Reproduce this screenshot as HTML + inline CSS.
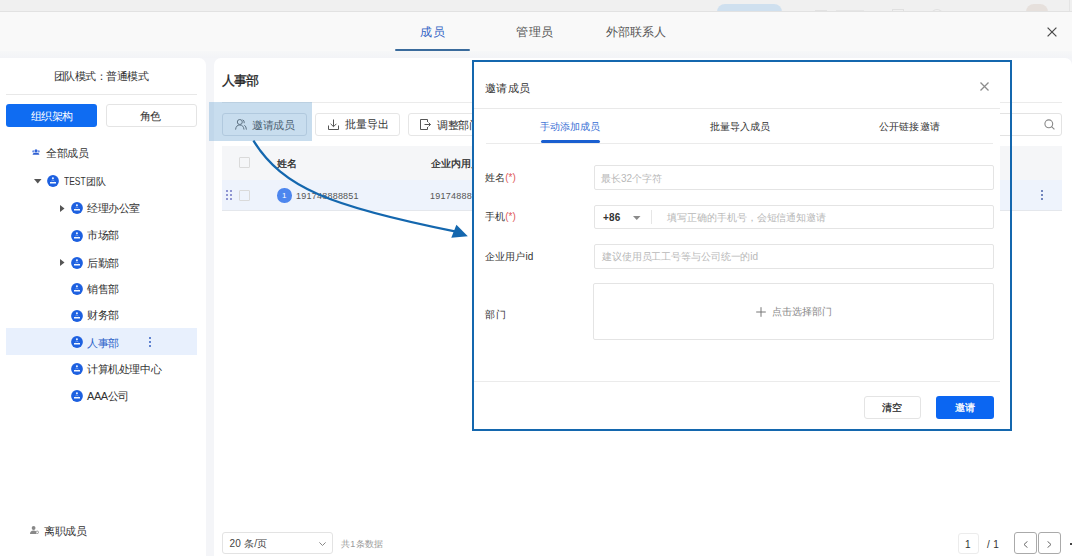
<!DOCTYPE html>
<html><head><meta charset="utf-8">
<style>
*{box-sizing:border-box;margin:0;padding:0}
html,body{width:1072px;height:556px;overflow:hidden;background:#f4f5f8;font-family:"Liberation Sans",sans-serif;color:#333}
.a{position:absolute}
.t{white-space:nowrap;line-height:1}
</style></head><body>
<div class="a" style="left:0;top:0;width:1072px;height:12px;background:#f0f0f0"></div>
<div class="a" style="left:717px;top:4px;width:65px;height:8px;border-radius:8px 8px 0 0;background:#cfe0ef"></div>
<div class="a" style="left:815px;top:10px;width:12px;height:1.5px;background:#e2e2e2"></div>
<div class="a" style="left:836px;top:10px;width:28px;height:1.5px;background:#e6e6e6"></div>
<div class="a" style="left:892px;top:9px;width:12px;height:3px;border:1px solid #e0e0e0;border-bottom:none"></div>
<div class="a" style="left:931px;top:9px;width:12px;height:6px;border-radius:6px 6px 0 0;border:1px solid #e0e0e0;border-bottom:none"></div>
<div class="a" style="left:1026px;top:4px;width:22px;height:8px;border-radius:11px 11px 0 0;background:#e6e0dc"></div>
<div class="a" style="left:1069px;top:0;width:1px;height:12px;background:#e4e4e4"></div>
<div class="a" style="left:0;top:11px;width:1072px;height:1px;background:#e2e2e2"></div>
<div class="a" style="left:0;top:12px;width:1072px;height:39px;background:#f9f9f9"></div>
<div class="a" style="left:0;top:51px;width:1072px;height:7px;background:linear-gradient(#f6f7f8,#f3f4f7)"></div>
<div class="a t" style="left:420px;top:26px;font-size:12px;letter-spacing:0.8px;color:#3565c5;font-weight:normal">成员</div>
<div class="a t" style="left:516px;top:26px;font-size:12px;letter-spacing:0.55px;color:#555;font-weight:normal">管理员</div>
<div class="a t" style="left:606px;top:26px;font-size:12px;letter-spacing:0.03px;color:#555;font-weight:normal">外部联系人</div>
<div class="a" style="left:395px;top:49px;width:75px;height:2px;background:#3a6b9c;border-radius:1px"></div>
<svg class="a" style="left:1046.5px;top:26.5px" width="10" height="10" viewBox="0 0 10 10"><path d="M0.6 0.6L9.4 9.4M9.4 0.6L0.6 9.4" stroke="#4a4a4a" stroke-width="1.25"/></svg>
<div class="a" style="left:0;top:58px;width:206px;height:520px;background:#fff;border-radius:0 7px 0 0"></div>
<div class="a t" style="left:54px;top:71px;font-size:11px;letter-spacing:-0.56px;color:#333;font-weight:normal">团队模式：普通模式</div>
<div class="a" style="left:6px;top:94px;width:191px;height:1px;background:#e8e8e8"></div>
<div class="a" style="left:6px;top:104px;width:91px;height:23px;background:#0f6cf2;border-radius:3px"></div>
<div class="a t" style="left:31px;top:111px;font-size:11px;letter-spacing:-0.53px;color:#fff;font-weight:normal">组织架构</div>
<div class="a" style="left:106px;top:104px;width:91px;height:23px;background:#fff;border:1px solid #e4e4e4;border-radius:3px"></div>
<div class="a t" style="left:140px;top:111px;font-size:11px;letter-spacing:-0.8px;color:#333;font-weight:normal">角色</div>
<svg class="a" style="left:32px;top:149px" width="8" height="6" viewBox="0 0 8 6"><circle cx="4" cy="1.7" r="1.5" fill="#2f63d8"/><circle cx="1.3" cy="2.4" r="1.1" fill="#6a8fe6"/><circle cx="6.7" cy="2.4" r="1.1" fill="#6a8fe6"/><path d="M0.6 5.8q0.4-2.4 3.4-2.4t3.4 2.4z" fill="#2f5fd0"/></svg>
<div class="a t" style="left:46px;top:148px;font-size:11px;letter-spacing:-0.4px;color:#333;font-weight:normal">全部成员</div>
<svg class="a" style="left:34px;top:179px" width="8" height="5" viewBox="0 0 8 5"><path d="M0 0h7.5L3.75 4.5z" fill="#555"/></svg>
<svg class="a" style="left:47px;top:174.6px" width="12" height="12" viewBox="0 0 12 12"><circle cx="6" cy="6" r="5.9" fill="#1d60e0"/><circle cx="5.9" cy="3.3" r="1.05" fill="#e8f0ff"/><path d="M4.3 6.1L5.9 4.9L7.5 6.1" fill="none" stroke="#a9c2f5" stroke-width="0.6"/><rect x="3" y="7" width="6" height="1.5" fill="#f4f8ff"/></svg>
<div class="a t" style="left:63.5px;top:176px;font-size:10px;color:#333"><span style="display:inline-block;font-size:10.8px;transform:scaleX(0.78);transform-origin:0 0;margin-right:-5.6px">TEST</span>团队</div>
<div class="a" style="left:6px;top:328px;width:191px;height:27px;background:#e8f0fd"></div>
<div class="a" style="left:149px;top:337px;width:2px;height:2px;background:#3560c0;border-radius:1px;box-shadow:0 4px 0 #3560c0,0 8px 0 #3560c0"></div>
<svg class="a" style="left:60px;top:204.5px" width="5" height="7" viewBox="0 0 5 7"><path d="M0 0v7L4.5 3.5z" fill="#555"/></svg>
<svg class="a" style="left:71px;top:202px" width="12" height="12" viewBox="0 0 12 12"><circle cx="6" cy="6" r="5.9" fill="#1d60e0"/><circle cx="5.9" cy="3.3" r="1.05" fill="#e8f0ff"/><path d="M4.3 6.1L5.9 4.9L7.5 6.1" fill="none" stroke="#a9c2f5" stroke-width="0.6"/><rect x="3" y="7" width="6" height="1.5" fill="#f4f8ff"/></svg>
<div class="a t" style="left:87px;top:203px;font-size:11px;letter-spacing:-0.4px;color:#333;font-weight:normal">经理办公室</div>
<svg class="a" style="left:71px;top:229.5px" width="12" height="12" viewBox="0 0 12 12"><circle cx="6" cy="6" r="5.9" fill="#1d60e0"/><circle cx="5.9" cy="3.3" r="1.05" fill="#e8f0ff"/><path d="M4.3 6.1L5.9 4.9L7.5 6.1" fill="none" stroke="#a9c2f5" stroke-width="0.6"/><rect x="3" y="7" width="6" height="1.5" fill="#f4f8ff"/></svg>
<div class="a t" style="left:87px;top:230px;font-size:11px;letter-spacing:-0.4px;color:#333;font-weight:normal">市场部</div>
<svg class="a" style="left:60px;top:259.0px" width="5" height="7" viewBox="0 0 5 7"><path d="M0 0v7L4.5 3.5z" fill="#555"/></svg>
<svg class="a" style="left:71px;top:256.5px" width="12" height="12" viewBox="0 0 12 12"><circle cx="6" cy="6" r="5.9" fill="#1d60e0"/><circle cx="5.9" cy="3.3" r="1.05" fill="#e8f0ff"/><path d="M4.3 6.1L5.9 4.9L7.5 6.1" fill="none" stroke="#a9c2f5" stroke-width="0.6"/><rect x="3" y="7" width="6" height="1.5" fill="#f4f8ff"/></svg>
<div class="a t" style="left:87px;top:258px;font-size:11px;letter-spacing:-0.4px;color:#333;font-weight:normal">后勤部</div>
<svg class="a" style="left:71px;top:282.7px" width="12" height="12" viewBox="0 0 12 12"><circle cx="6" cy="6" r="5.9" fill="#1d60e0"/><circle cx="5.9" cy="3.3" r="1.05" fill="#e8f0ff"/><path d="M4.3 6.1L5.9 4.9L7.5 6.1" fill="none" stroke="#a9c2f5" stroke-width="0.6"/><rect x="3" y="7" width="6" height="1.5" fill="#f4f8ff"/></svg>
<div class="a t" style="left:87px;top:284px;font-size:11px;letter-spacing:-0.4px;color:#333;font-weight:normal">销售部</div>
<svg class="a" style="left:71px;top:309.5px" width="12" height="12" viewBox="0 0 12 12"><circle cx="6" cy="6" r="5.9" fill="#1d60e0"/><circle cx="5.9" cy="3.3" r="1.05" fill="#e8f0ff"/><path d="M4.3 6.1L5.9 4.9L7.5 6.1" fill="none" stroke="#a9c2f5" stroke-width="0.6"/><rect x="3" y="7" width="6" height="1.5" fill="#f4f8ff"/></svg>
<div class="a t" style="left:87px;top:310px;font-size:11px;letter-spacing:-0.4px;color:#333;font-weight:normal">财务部</div>
<svg class="a" style="left:71px;top:336px" width="12" height="12" viewBox="0 0 12 12"><circle cx="6" cy="6" r="5.9" fill="#1d60e0"/><circle cx="5.9" cy="3.3" r="1.05" fill="#e8f0ff"/><path d="M4.3 6.1L5.9 4.9L7.5 6.1" fill="none" stroke="#a9c2f5" stroke-width="0.6"/><rect x="3" y="7" width="6" height="1.5" fill="#f4f8ff"/></svg>
<div class="a t" style="left:87px;top:338px;font-size:11px;letter-spacing:-0.4px;color:#2d62c8;font-weight:normal">人事部</div>
<svg class="a" style="left:71px;top:363px" width="12" height="12" viewBox="0 0 12 12"><circle cx="6" cy="6" r="5.9" fill="#1d60e0"/><circle cx="5.9" cy="3.3" r="1.05" fill="#e8f0ff"/><path d="M4.3 6.1L5.9 4.9L7.5 6.1" fill="none" stroke="#a9c2f5" stroke-width="0.6"/><rect x="3" y="7" width="6" height="1.5" fill="#f4f8ff"/></svg>
<div class="a t" style="left:87px;top:364px;font-size:11px;letter-spacing:-0.4px;color:#333;font-weight:normal">计算机处理中心</div>
<svg class="a" style="left:71px;top:390px" width="12" height="12" viewBox="0 0 12 12"><circle cx="6" cy="6" r="5.9" fill="#1d60e0"/><circle cx="5.9" cy="3.3" r="1.05" fill="#e8f0ff"/><path d="M4.3 6.1L5.9 4.9L7.5 6.1" fill="none" stroke="#a9c2f5" stroke-width="0.6"/><rect x="3" y="7" width="6" height="1.5" fill="#f4f8ff"/></svg>
<div class="a t" style="left:87px;top:391px;font-size:11px;letter-spacing:-0.4px;color:#333;font-weight:normal">AAA公司</div>
<svg class="a" style="left:30px;top:526px" width="9" height="8" viewBox="0 0 9 8"><circle cx="3.6" cy="2" r="1.9" fill="#888"/><path d="M0 8q0-3.6 3.6-3.6q1.6 0 2.4 0.8v2.8z" fill="#888"/><circle cx="7.2" cy="6.3" r="1.3" fill="none" stroke="#888" stroke-width="0.8"/></svg>
<div class="a t" style="left:44px;top:526px;font-size:11px;letter-spacing:-0.4px;color:#333;font-weight:normal">离职成员</div>
<div class="a" style="left:213.5px;top:58px;width:858.5px;height:520px;background:#fff;border-radius:7px 7px 0 0"></div>
<div class="a t" style="left:222px;top:74px;font-size:13px;letter-spacing:-1.1px;color:#222;font-weight:normal;-webkit-text-stroke:0.3px #222">人事部</div>
<div class="a" style="left:222px;top:102px;width:840px;height:1px;background:#ebebeb"></div>
<div class="a" style="left:222px;top:113px;width:85px;height:23px;border:1px solid #dadfe5;border-radius:3px;background:#fff"></div>
<svg class="a" style="left:235px;top:119px" width="12" height="11" viewBox="0 0 12 11"><circle cx="4.8" cy="3" r="2.5" fill="none" stroke="#555" stroke-width="1"/><path d="M0.6 10.6q0.4-4.6 4.2-4.6t4.2 4.6" fill="none" stroke="#555" stroke-width="1"/><path d="M7.6 0.8q2 0.5 1.6 3.4M9.4 6.2q1.9 1.2 2 4.4" fill="none" stroke="#555" stroke-width="1"/></svg>
<div class="a t" style="left:252px;top:120px;font-size:11px;letter-spacing:-0.43px;color:#333;font-weight:normal">邀请成员</div>
<div class="a" style="left:315px;top:113px;width:85px;height:23px;border:1px solid #e6e6e6;border-radius:3px;background:#fff"></div>
<svg class="a" style="left:328px;top:119px" width="11" height="11" viewBox="0 0 11 11"><path d="M5.5 0.5v7M2.6 4.8L5.5 7.7l2.9-2.9M0.5 6.5v4h10v-4" fill="none" stroke="#555" stroke-width="1"/></svg>
<div class="a t" style="left:345px;top:119px;font-size:11px;letter-spacing:-0.1px;color:#333;font-weight:normal">批量导出</div>
<div class="a" style="left:408px;top:113px;width:85px;height:23px;border:1px solid #e6e6e6;border-radius:3px;background:#fff"></div>
<svg class="a" style="left:420px;top:119px" width="11" height="11" viewBox="0 0 11 11"><path d="M7.5 3V0.5h-7v10h7V8M4.5 5.5h6M8.6 3.6l1.9 1.9-1.9 1.9" fill="none" stroke="#555" stroke-width="1"/></svg>
<div class="a t" style="left:437px;top:120px;font-size:11px;letter-spacing:-0.43px;color:#333;font-weight:normal">调整部门</div>
<div class="a" style="left:900px;top:113px;width:162px;height:23px;border:1px solid #e3e3e3;border-radius:3px;background:#fff"></div>
<svg class="a" style="left:1044px;top:119px" width="11" height="11" viewBox="0 0 11 11"><circle cx="4.8" cy="4.8" r="3.9" fill="none" stroke="#888" stroke-width="1.1"/><path d="M7.6 7.6l2.8 2.8" stroke="#888" stroke-width="1.1"/></svg>
<div class="a" style="left:222px;top:145.5px;width:840px;height:34.5px;background:#f5f6f8"></div>
<div class="a" style="left:239px;top:157px;width:11px;height:11px;border:1px solid #dadada;background:transparent;border-radius:1px"></div>
<div class="a t" style="left:277px;top:159px;font-size:10px;letter-spacing:0.4px;color:#222;font-weight:normal;-webkit-text-stroke:0.25px #222">姓名</div>
<div class="a t" style="left:431px;top:159px;font-size:10px;letter-spacing:0.0px;color:#222;font-weight:normal;-webkit-text-stroke:0.25px #222">企业内用户id</div>
<div class="a" style="left:222px;top:180px;width:840px;height:31px;background:#eef3fc;border-bottom:1px solid #e4e7ec"></div>
<div class="a" style="left:226px;top:190px;width:1.6px;height:1.6px;background:#8f95d2;box-shadow:4px 0 0 #8f95d2,0 4px 0 #8f95d2,4px 4px 0 #8f95d2,0 8px 0 #8f95d2,4px 8px 0 #8f95d2"></div>
<div class="a" style="left:239px;top:190px;width:11px;height:11px;border:1px solid #dadada;background:transparent;border-radius:1px"></div>
<div class="a" style="left:277px;top:188px;width:14.5px;height:14.5px;border-radius:50%;background:#4d86ee"></div>
<div class="a t" style="left:282px;top:191.5px;font-size:8px;color:#fff">1</div>
<div class="a t" style="left:296px;top:192px;font-size:9px;letter-spacing:0.23px;color:#555;font-weight:normal">191748888851</div>
<div class="a t" style="left:430px;top:192px;font-size:9px;letter-spacing:0.23px;color:#555;font-weight:normal">191748888851</div>
<div class="a" style="left:1041px;top:190px;width:2px;height:2px;background:#4a62a8;border-radius:1px;box-shadow:0 4px 0 #4a62a8,0 8px 0 #4a62a8"></div>
<div class="a" style="left:209px;top:102px;width:103px;height:39px;background:rgba(110,165,210,0.38)"></div>
<div class="a" style="left:222px;top:532px;width:111px;height:22px;border:1px solid #e3e3e3;border-radius:3px;background:#fff"></div>
<div class="a t" style="left:229.5px;top:539px;font-size:10px;letter-spacing:0.2px;color:#444;font-weight:normal">20 条/页</div>
<svg class="a" style="left:319px;top:542px" width="7" height="4" viewBox="0 0 7 4"><path d="M0.4 0.4L3.5 3.5l3.1-3.1" fill="none" stroke="#888" stroke-width="1"/></svg>
<div class="a t" style="left:341px;top:540px;font-size:9px;letter-spacing:0.3px;color:#999;font-weight:normal">共1条数据</div>
<div class="a" style="left:957.5px;top:532.5px;width:21px;height:21px;border:1px solid #ececec;border-radius:3px;background:#fff"></div>
<div class="a t" style="left:965px;top:540px;font-size:10px;letter-spacing:0.0px;color:#333;font-weight:normal">1</div>
<div class="a t" style="left:987px;top:540px;font-size:10px;letter-spacing:0.3px;color:#333;font-weight:normal">/ 1</div>
<div class="a" style="left:1014px;top:532px;width:22.5px;height:22px;border:1px solid #aaa;border-radius:3px;background:#fff"></div>
<svg class="a" style="left:1023px;top:541px" width="5" height="7" viewBox="0 0 5 7"><path d="M4.5 0.3L1 3.5l3.5 3.2" fill="none" stroke="#666" stroke-width="1"/></svg>
<div class="a" style="left:1038px;top:532px;width:22.5px;height:22px;border:1px solid #aaa;border-radius:3px;background:#fff"></div>
<svg class="a" style="left:1047px;top:541px" width="5" height="7" viewBox="0 0 5 7"><path d="M0.5 0.3L4 3.5l-3.5 3.2" fill="none" stroke="#666" stroke-width="1"/></svg>
<div class="a" style="left:1070px;top:543px;width:2px;height:2px;background:#444"></div>
<div class="a" style="left:474px;top:62px;width:526px;height:367px;background:#fff"></div>
<div class="a t" style="left:485px;top:83px;font-size:11px;letter-spacing:0.4px;color:#333;font-weight:normal">邀请成员</div>
<svg class="a" style="left:980px;top:81.7px" width="9" height="9" viewBox="0 0 9 9"><path d="M0.5 0.5l8 8M8.5 0.5l-8 8" stroke="#8c8c8c" stroke-width="1.25"/></svg>
<div class="a" style="left:474px;top:108px;width:526px;height:1px;background:#e9e9e9"></div>
<div class="a t" style="left:540px;top:122px;font-size:10px;letter-spacing:0.06px;color:#3a70d5;font-weight:normal">手动添加成员</div>
<div class="a t" style="left:710px;top:122px;font-size:10px;letter-spacing:-0.06px;color:#333;font-weight:normal">批量导入成员</div>
<div class="a t" style="left:879px;top:122px;font-size:10px;letter-spacing:0.14px;color:#333;font-weight:normal">公开链接邀请</div>
<div class="a" style="left:541px;top:140px;width:59px;height:3px;border-radius:1.5px;background:#1a5fd0"></div>
<div class="a" style="left:486px;top:143px;width:507px;height:1px;background:#ebebeb"></div>
<div class="a t" style="left:485px;top:173px;font-size:10px;letter-spacing:0.08px;color:#333;font-weight:normal">姓名<span style="color:#e05a5a">(*)</span></div>
<div class="a" style="left:594px;top:165px;width:400px;height:25px;border:1px solid #e4e4e4;border-radius:2px"></div>
<div class="a t" style="left:601px;top:174px;font-size:10px;letter-spacing:0.02px;color:#b8b8b8;font-weight:normal">最长32个字符</div>
<div class="a t" style="left:485px;top:212px;font-size:10px;letter-spacing:0.08px;color:#333;font-weight:normal">手机<span style="color:#e05a5a">(*)</span></div>
<div class="a" style="left:594px;top:204.5px;width:400px;height:24.5px;border:1px solid #e4e4e4;border-radius:2px"></div>
<div class="a t" style="left:603px;top:213px;font-size:10px;letter-spacing:0.2px;color:#333;font-weight:bold">+86</div>
<svg class="a" style="left:633px;top:215.5px" width="8" height="4" viewBox="0 0 8 4"><path d="M0 0h7.5L3.75 4z" fill="#8a8a8a"/></svg>
<div class="a" style="left:651px;top:210px;width:1px;height:14px;background:#e6e6e6"></div>
<div class="a t" style="left:667px;top:213px;font-size:10px;letter-spacing:-0.05px;color:#b8b8b8;font-weight:normal">填写正确的手机号，会短信通知邀请</div>
<div class="a t" style="left:485px;top:252px;font-size:10px;letter-spacing:0.12px;color:#333;font-weight:normal">企业用户id</div>
<div class="a" style="left:594px;top:244px;width:400px;height:24.5px;border:1px solid #e4e4e4;border-radius:2px"></div>
<div class="a t" style="left:602px;top:252px;font-size:10px;letter-spacing:-0.11px;color:#b8b8b8;font-weight:normal">建议使用员工工号等与公司统一的id</div>
<div class="a t" style="left:485px;top:310px;font-size:10px;letter-spacing:0.8px;color:#333;font-weight:normal">部门</div>
<div class="a" style="left:593px;top:283px;width:401px;height:57px;border:1px solid #e4e4e4;border-radius:2px"></div>
<svg class="a" style="left:755.5px;top:306.5px" width="10" height="10" viewBox="0 0 10 10"><path d="M5 0.2v9.6M0.2 5h9.6" stroke="#777" stroke-width="1"/></svg>
<div class="a t" style="left:772px;top:307px;font-size:10px;letter-spacing:-0.02px;color:#888;font-weight:normal">点击选择部门</div>
<div class="a" style="left:474px;top:381px;width:526px;height:1px;background:#ebebeb"></div>
<div class="a" style="left:864px;top:396px;width:57px;height:22.5px;border:1px solid #e4e4e4;border-radius:3px;background:#fff"></div>
<div class="a t" style="left:882px;top:403px;font-size:10px;letter-spacing:0.3px;color:#222;font-weight:normal;-webkit-text-stroke:0.2px #222">清空</div>
<div class="a" style="left:936px;top:396px;width:58px;height:22.5px;border-radius:3px;background:#0b66f2"></div>
<div class="a t" style="left:955px;top:403px;font-size:10px;letter-spacing:-0.2px;color:#fff;font-weight:normal;-webkit-text-stroke:0.3px #fff">邀请</div>
<div class="a" style="left:472px;top:60px;width:540px;height:371px;border:2px solid #1467ae"></div>
<svg class="a" style="left:0;top:0" width="1072" height="556" viewBox="0 0 1072 556"><path d="M253.4 140.7C283.1 188.1 330.6 206.4 456 231.6" fill="none" stroke="#1467ae" stroke-width="2.2"/><path d="M467.8 236.3L451.3 237.7L456.4 224.7Z" fill="#1467ae"/></svg>
</body></html>
